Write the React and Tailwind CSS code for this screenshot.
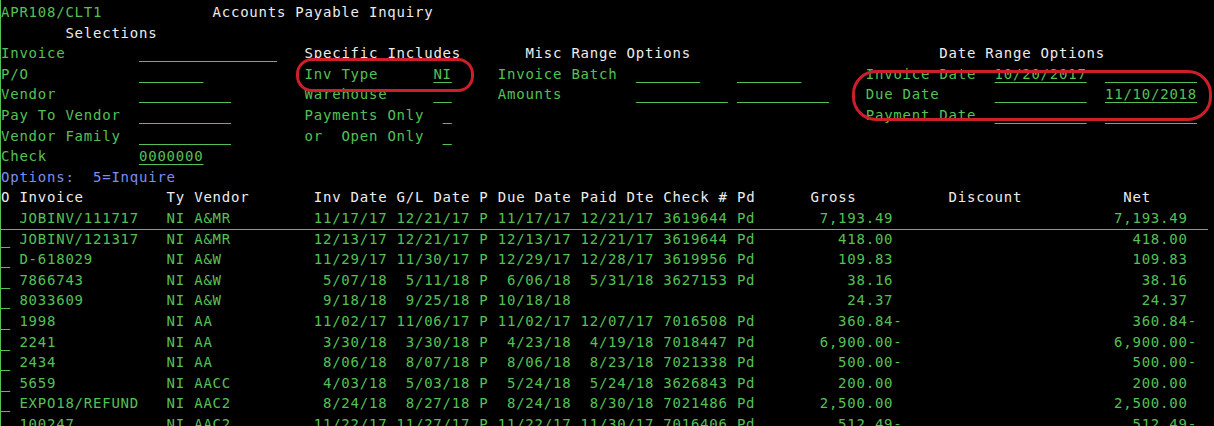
import React from 'react'

// 5250 green screen, 132 columns, each cell 9.2px wide and 20.6px tall
const KIND = {
  g: 'text-[#55c155]',
  w: 'text-[#ececec]',
  b: 'text-[#7d8ef2]',
  u: 'text-[#55c155] underline decoration-1 underline-offset-[3px] decoration-[#55c155]',
}

const HEAD = [
  [[0, 'APR108/CLT1'], [23, 'Accounts Payable Inquiry', 'w']],
  [[7, 'Selections', 'w']],
  [[0, 'Invoice'], [15, 15, 'u'], [33, 'Specific Includes', 'w'], [57, 'Misc Range Options', 'w'], [102, 'Date Range Options', 'w']],
  [[0, 'P/O'], [15, 7, 'u'], [33, 'Inv Type'], [47, 'NI', 'u'], [54, 'Invoice Batch'], [69, 7, 'u'], [80, 7, 'u'], [94, 'Invoice Date'], [108, '10/20/2017', 'u'], [120, 10, 'u']],
  [[0, 'Vendor'], [15, 10, 'u'], [33, 'Warehouse'], [47, 2, 'u'], [54, 'Amounts'], [69, 10, 'u'], [80, 10, 'u'], [94, 'Due Date'], [108, 10, 'u'], [120, '11/10/2018', 'u']],
  [[0, 'Pay To Vendor'], [15, 10, 'u'], [33, 'Payments Only'], [48, 1, 'u'], [94, 'Payment Date'], [108, 10, 'u'], [120, 10, 'u']],
  [[0, 'Vendor Family'], [15, 10, 'u'], [33, 'or  Open Only'], [48, 1, 'u']],
  [[0, 'Check'], [15, '0000000', 'u']],
  [[0, 'Options:  5=Inquire', 'b']],
  [[0, 'O Invoice', 'w'], [18, 'Ty Vendor', 'w'], [34, 'Inv Date G/L Date P Due Date Paid Dte Check # Pd', 'w'], [88, 'Gross', 'w'], [103, 'Discount', 'w'], [122, 'Net', 'w']],
]

const INVOICES = [
  ['JOBINV/111717', 'A&MR', '11/17/17', '12/21/17', '11/17/17', '12/21/17', '3619644', 'Pd', '7,193.49'],
  ['JOBINV/121317', 'A&MR', '12/13/17', '12/21/17', '12/13/17', '12/21/17', '3619644', 'Pd', '418.00'],
  ['D-618029', 'A&W', '11/29/17', '11/30/17', '12/29/17', '12/28/17', '3619956', 'Pd', '109.83'],
  ['7866743', 'A&W', '5/07/18', '5/11/18', '6/06/18', '5/31/18', '3627153', 'Pd', '38.16'],
  ['8033609', 'A&W', '9/18/18', '9/25/18', '10/18/18', '', '', '', '24.37'],
  ['1998', 'AA', '11/02/17', '11/06/17', '11/02/17', '12/07/17', '7016508', 'Pd', '360.84-'],
  ['2241', 'AA', '3/30/18', '3/30/18', '4/23/18', '4/19/18', '7018447', 'Pd', '6,900.00-'],
  ['2434', 'AA', '8/06/18', '8/07/18', '8/06/18', '8/23/18', '7021338', 'Pd', '500.00-'],
  ['5659', 'AACC', '4/03/18', '5/03/18', '5/24/18', '5/24/18', '3626843', 'Pd', '200.00'],
  ['EXPO18/REFUND', 'AAC2', '8/24/18', '8/27/18', '8/24/18', '8/30/18', '7021486', 'Pd', '2,500.00'],
  ['100247', 'AAC2', '11/22/17', '11/27/17', '11/22/17', '11/30/17', '7016406', 'Pd', '512.49-'],
]

function money(v, width) {
  const neg = v.endsWith('-')
  return v.replace('-', '').padStart(width) + (neg ? '-' : ' ')
}

function invoiceText([inv, vendor, invDate, gl, due, paid, check, pd, amount]) {
  return (
    ' ' + inv.padEnd(16) + 'NI ' + vendor.padEnd(13) +
    invDate.padStart(8) + ' ' + gl.padStart(8) + ' P ' +
    due.padStart(8) + ' ' + paid.padStart(8) + ' ' +
    check.padEnd(7) + ' ' + pd.padEnd(2) +
    money(amount, 15) + money(amount, 31)
  )
}

function Line({ segs }) {
  let pos = 0
  const out = []
  segs.forEach(([col, text, kind = 'g'], i) => {
    if (col > pos) out.push(' '.repeat(col - pos))
    const t = typeof text === 'number' ? ' '.repeat(text) : text
    out.push(<span key={i} className={KIND[kind]}>{t}</span>)
    pos = col + t.length
  })
  return <div className="h-[20.6px]">{out}</div>
}

export default function App() {
  return (
    <div className="relative h-[426px] w-[1214px] overflow-hidden border-l border-[#55c155] bg-black pt-[2px] font-['DejaVu_Sans_Mono',monospace] text-[14px] leading-[20.6px] tracking-[0.77px] whitespace-pre">
      {HEAD.map((segs, i) => <Line key={i} segs={segs} />)}

      {INVOICES.map((row, i) => (
        <div
          key={row[0]}
          className={i === 0 ? 'h-[20.6px] w-[1207px] text-[#55c155] shadow-[0_1px_0_#55c155]' : 'h-[20.6px] text-[#55c155]'}
        >
          <span className={i === 0 ? '' : KIND.u}> </span>
          {invoiceText(row)}
        </div>
      ))}

      {/* red marker rings drawn over the screen */}
      <div className="absolute left-[295px] top-[58px] h-[34px] w-[178px] rounded-[16px] border-[3px] border-[#cc1f29]" />
      <div className="absolute left-[851px] top-[70px] h-[51px] w-[360px] rounded-[24px] border-[3px] border-[#cc1f29]" />
    </div>
  )
}
